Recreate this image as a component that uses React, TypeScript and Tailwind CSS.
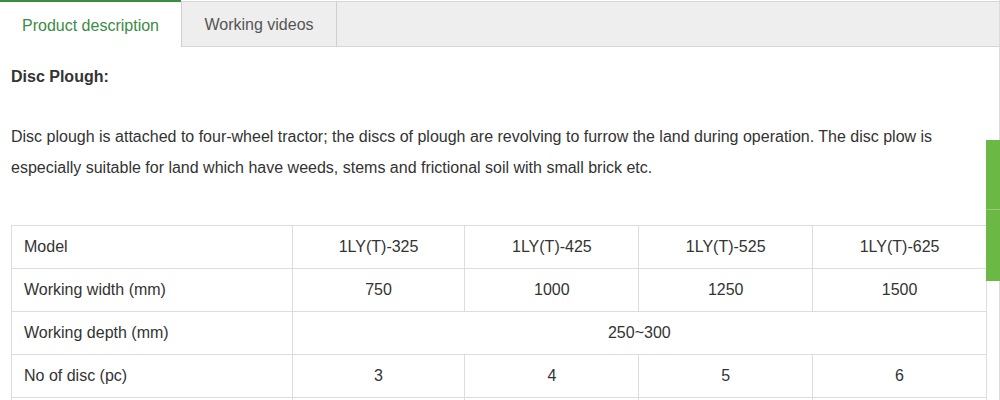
import React from "react";

const rows: { label: string; cells: string[] | string }[] = [
  { label: "Model", cells: ["1LY(T)-325", "1LY(T)-425", "1LY(T)-525", "1LY(T)-625"] },
  { label: "Working width (mm)", cells: ["750", "1000", "1250", "1500"] },
  { label: "Working depth (mm)", cells: "250~300" },
  { label: "No of disc (pc)", cells: ["3", "4", "5", "6"] },
  { label: "", cells: ["", "", "", ""] },
];

export default function App() {
  return (
    <div
      className="relative w-[1000px] h-[400px] overflow-hidden bg-white text-[#333]"
      style={{ fontFamily: '"Liberation Sans", Arial, sans-serif' }}
    >
      <div className="w-[1000px] border-r border-[#dcdcdc] h-[400px]">
        {/* Tabs */}
        <div className="flex h-[47px]">
          <div className="w-[181px] h-[47px] bg-white border-t-2 border-[#3b8c3f] flex items-center justify-center pt-[2px] text-[16px] text-[#3b8b45]">
            Product description
          </div>
          <div className="flex-1 flex mt-[1px] h-[46px] bg-[#eeeeee] border-t border-b border-[#d6d6d6]">
            <div className="w-[156px] h-full border-l border-r border-[#cfcfcf] flex items-center justify-center pt-[2px] text-[16px] text-[#555]">
              Working videos
            </div>
            <div className="flex-1" />
          </div>
        </div>

        {/* Content */}
        <div className="pl-[11px] pr-[12px]">
          <div className="mt-[14px] leading-[31px] text-[16px] font-bold text-[#333]">Disc Plough:</div>
          <p className="mt-[29px] leading-[31px] text-[16px] text-[#333]">
            Disc plough is attached to four-wheel tractor; the discs of plough are revolving to furrow the land during operation. The disc plow is especially suitable for land which have weeds, stems and frictional soil with small brick etc.
          </p>
          <table className="mt-[42px] w-[976px] border-collapse text-[16px] text-[#333]">
            <colgroup>
              <col className="w-[281px]" />
              <col className="w-[173px]" />
              <col className="w-[174px]" />
              <col className="w-[174px]" />
              <col className="w-[174px]" />
            </colgroup>
            <tbody>
              {rows.map((r, ri) => (
                <tr key={ri} className="h-[43px]">
                  <td className="border border-[#dddddd] pl-[12px] p-0 align-middle">{r.label}</td>
                  {typeof r.cells === "string" ? (
                    <td colSpan={4} className="border border-[#dddddd] text-center p-0 align-middle">
                      {r.cells}
                    </td>
                  ) : (
                    r.cells.map((c, i) => (
                      <td key={i} className="border border-[#dddddd] text-center p-0 align-middle">
                        {c}
                      </td>
                    ))
                  )}
                </tr>
              ))}
            </tbody>
          </table>
        </div>
      </div>

      {/* Floating side widget */}
      <div className="absolute right-0 top-[140px] w-[14px] h-[141px] flex flex-col">
        <div className="h-[70px] bg-[#6bb944] border-b border-[#93cd77]" />
        <div className="flex-1 bg-[#6bb944]" />
      </div>
    </div>
  );
}
